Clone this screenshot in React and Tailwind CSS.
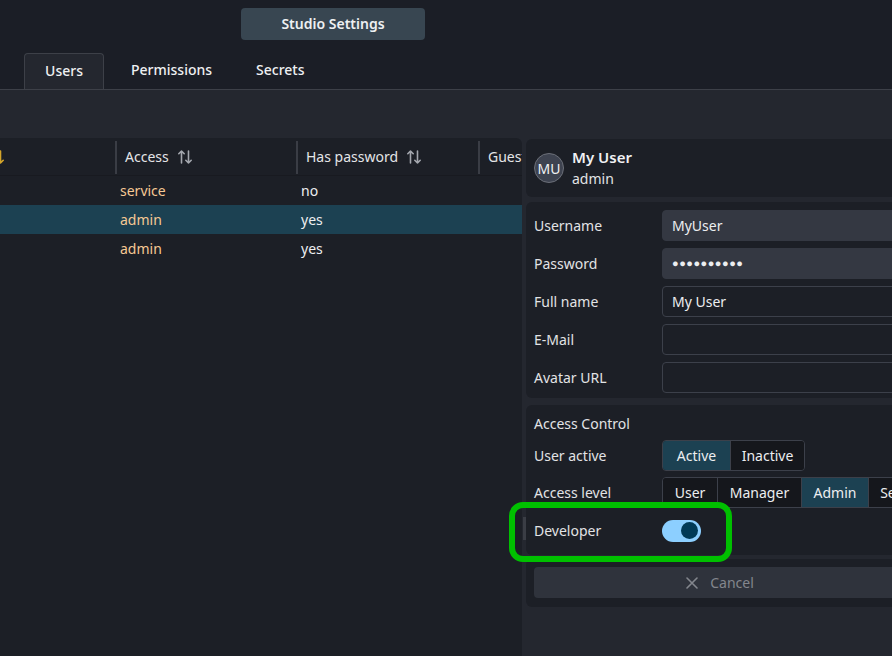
import React from 'react';

const font = { fontFamily: '"Noto Sans", "Open Sans", sans-serif' };

function SortIcon({ color = '#a4a7ae', className = '' }) {
  return (
    <svg width="16" height="16" viewBox="0 0 16 16" className={className} fill="none" stroke={color} strokeWidth="1.6" strokeLinecap="round" strokeLinejoin="round">
      <path d="M4.5 14V2M1.8 4.7L4.5 2l2.7 2.7" />
      <path d="M11.5 2v12M8.8 11.3l2.7 2.7 2.7-2.7" />
    </svg>
  );
}

const columns = [
  { label: '', w: 'w-[115px]' },
  { label: 'Access', w: 'w-[181px]' },
  { label: 'Has password', w: 'w-[182px]' },
  { label: 'Guest', w: 'w-[120px]' },
];

const rows = [
  { access: 'service', pw: 'no' },
  { access: 'admin', pw: 'yes', selected: true },
  { access: 'admin', pw: 'yes' },
];

function UsersTable() {
  return (
    <div className="w-[522px] shrink-0 bg-[#1c1f26] rounded-tr-md overflow-hidden flex flex-col">
      <div className="flex h-[38px] border-b border-[#181a20] shrink-0">
        {columns.map((c, i) => (
          <div key={i} className={`${c.w} shrink-0 flex items-stretch`}>
            {i > 0 && <div className="w-[2px] bg-[#3a3d45] mt-[3px] mb-[1px]" />}
            {i === 0 ? (
              <div className="flex-1 flex items-center">
                <SortIcon color="#d4a52a" className="-ml-[11px]" />
              </div>
            ) : (
              <div className="flex-1 flex items-center gap-[8px] pl-[8px] text-[14px] text-[#e4e5e7] whitespace-nowrap">
                {c.label}
                {i < 3 && <SortIcon />}
              </div>
            )}
          </div>
        ))}
      </div>
      {rows.map((r, i) => (
        <div key={i} className={`flex h-[29px] items-center text-[14px] ${r.selected ? 'bg-[#1c4152]' : ''}`}>
          <div className="w-[116px] shrink-0" />
          <div className="w-[181px] shrink-0 pl-[4px] text-[#f6c894]">{r.access}</div>
          <div className="w-[182px] shrink-0 pl-[4px] text-[#eceef0]">{r.pw}</div>
        </div>
      ))}
    </div>
  );
}

function Field({ label, value, filled, password }) {
  return (
    <div className="flex items-center h-[31px]">
      <div className="w-[128px] shrink-0 text-[14px] text-[#e2e3e5]">{label}</div>
      <div
        className={`flex-1 h-full rounded-[4px] flex items-center px-[9px] text-[14px] text-[#eceef0] border ${
          filled ? 'bg-[#343842] border-[#343842]' : 'border-[#3c404a]'
        }`}
      >
        {password ? <span className="tracking-[0.5px] text-[11px]">●●●●●●●●●●</span> : value}
      </div>
    </div>
  );
}

function Segmented({ items, active }) {
  return (
    <div className="flex h-[31px] rounded-[4px] border border-[#3c404a] overflow-hidden">
      {items.map((it, i) => (
        <div
          key={it.label}
          className={`${it.w} shrink-0 flex items-center justify-center text-[14px] text-[#eceef0] ${
            i > 0 ? 'border-l border-[#3c404a]' : ''
          } ${it.label === active ? 'bg-[#1c4152]' : 'bg-[#15171c]'}`}
        >
          {it.label}
        </div>
      ))}
    </div>
  );
}

function UserPanel() {
  return (
    <div className="w-[388px] shrink-0 flex flex-col gap-[5px] pt-px">
      <div className="h-[58px] bg-[#1c1f26] rounded-md flex items-center gap-[8px] px-[8px]">
        <div className="w-[30px] h-[30px] rounded-full bg-[#3e4350] border border-[#6b6f78] flex items-center justify-center text-[14px] text-[#f0f1f3]">
          MU
        </div>
        <div className="flex flex-col leading-[22px]">
          <span className="text-[15px] font-semibold text-[#f0f1f3]">My User</span>
          <span className="text-[14px] text-[#e2e3e5]">admin</span>
        </div>
      </div>

      <div className="bg-[#1c1f26] rounded-md p-[8px] pb-[5px] flex flex-col gap-[7px]">
        <Field label="Username" value="MyUser" filled />
        <Field label="Password" filled password />
        <Field label="Full name" value="My User" />
        <Field label="E-Mail" value="" />
        <Field label="Avatar URL" value="" />
      </div>

      <div className="bg-[#1c1f26] rounded-md px-[8px] pt-[7px] pb-[8px] flex flex-col gap-[6px] mt-[2px]">
        <div className="h-[22px] flex items-center text-[14px] text-[#e2e3e5]">Access Control</div>
        <div className="flex items-center">
          <div className="w-[128px] shrink-0 text-[14px] text-[#e2e3e5]">User active</div>
          <Segmented
            active="Active"
            items={[
              { label: 'Active', w: 'w-[67px]' },
              { label: 'Inactive', w: 'w-[74px]' },
            ]}
          />
        </div>
        <div className="flex items-center">
          <div className="w-[128px] shrink-0 text-[14px] text-[#e2e3e5]">Access level</div>
          <Segmented
            active="Admin"
            items={[
              { label: 'User', w: 'w-[54px]' },
              { label: 'Manager', w: 'w-[84px]' },
              { label: 'Admin', w: 'w-[67px]' },
              { label: 'Service', w: 'w-[70px]' },
            ]}
          />
        </div>
        <div className="relative flex items-center h-[33px]">
          <div className="w-[128px] shrink-0 text-[14px] text-[#e2e3e5]">Developer</div>
          <div className="w-[39px] h-[22px] rounded-full bg-[#8ccfff] flex items-center justify-end pr-[3px]">
            <div className="w-[17px] h-[17px] rounded-full bg-[#003a57]" />
          </div>
          <div className="absolute left-[-25px] top-[-12px] w-[223px] h-[60px] border-[6px] border-[#00c000] rounded-[14px] pointer-events-none" />
        </div>
      </div>

      <div className="bg-[#1c1f26] rounded-md p-[8px] pb-[9px] -mt-px">
        <div className="h-[31px] rounded-[4px] bg-[#2f333c] flex items-center justify-center gap-[12px] text-[14px] text-[#83868d]">
          <svg width="12" height="12" viewBox="0 0 12 12" stroke="#83868d" strokeWidth="1.6" strokeLinecap="round">
            <path d="M1 1l10 10M11 1L1 11" />
          </svg>
          Cancel
        </div>
      </div>
    </div>
  );
}

export default function App() {
  return (
    <div className="w-full h-[656px] bg-[#1b1e26] overflow-hidden flex flex-col" style={font}>
      <div className="pt-[8px] pl-[241px] shrink-0">
        <div className="w-[184px] h-[32px] pb-[2px] rounded-[4px] bg-[#384651] flex items-center justify-center text-[14px] font-semibold text-[#eef0f2]">
          Studio Settings
        </div>
      </div>

      <div className="flex mt-[13px] pl-[24px] border-b border-[#3d4048] shrink-0">
        <div className="w-[80px] h-[36px] pb-[2px] -mb-px bg-[#24272f] border border-b-0 border-[#3d4048] rounded-t-[4px] flex items-center justify-center text-[14px] font-medium text-[#eef0f2]">
          Users
        </div>
        <div className="h-[36px] pb-[3px] pl-[27px] pr-[22px] flex items-center text-[14px] font-medium text-[#eef0f2]">Permissions</div>
        <div className="h-[36px] pb-[3px] pl-[22px] flex items-center text-[14px] font-medium text-[#eef0f2]">Secrets</div>
      </div>

      <div className="flex-1 bg-[#24272f] pt-[48px] flex min-h-0">
        <UsersTable />
        <div className="w-[4px] shrink-0 flex flex-col items-center">
          <div className="mt-[379px] w-[3px] h-[23px] bg-[#3a3d45]" />
        </div>
        <UserPanel />
      </div>
    </div>
  );
}
